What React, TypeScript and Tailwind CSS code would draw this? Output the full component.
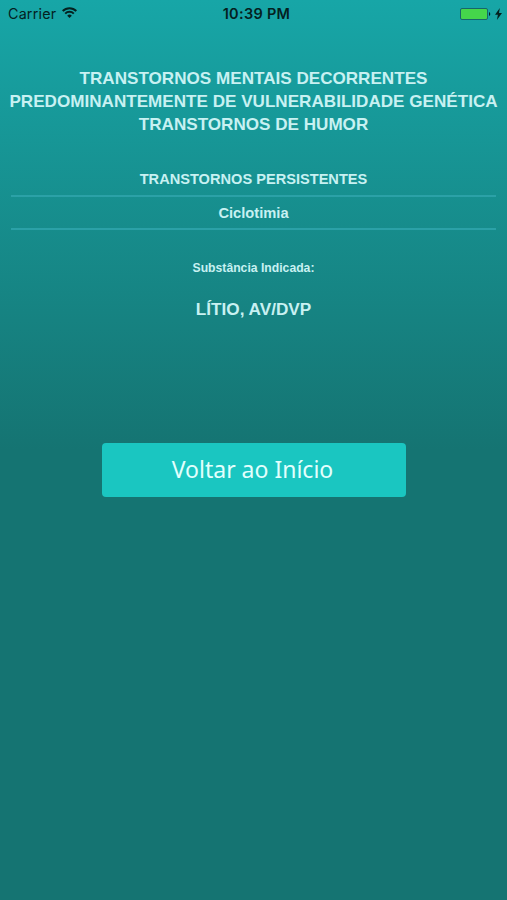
function StatusBar() {
  return (
    <header className="grid h-[28px] grid-cols-3 items-center pl-[8px] pr-[5px] font-[Inter,sans-serif] text-[#04211f]">
      <div className="flex items-center gap-[6px]">
        <span className="text-[14.3px] leading-none tracking-[0.2px]">Carrier</span>
        <svg className="mb-[2px]" width="15" height="11" viewBox="0 0 15 11" fill="none" stroke="currentColor" strokeWidth="2">
          <path d="M0.7 4a9.6 9.6 0 0 1 13.6 0" />
          <path d="M3.2 6.6a6.1 6.1 0 0 1 8.6 0" />
          <path d="M7.5 11 5.2 8.7a3.3 3.3 0 0 1 4.6 0z" fill="currentColor" stroke="none" />
        </svg>
      </div>
      <span className="pl-[3px] text-center text-[14.5px] font-semibold leading-none tracking-[0.3px]">10:39 PM</span>
      <div className="flex items-center justify-end gap-[4px]">
        <svg width="31" height="12" viewBox="0 0 31 12">
          <rect x="0.5" y="0.5" width="27" height="11" rx="1.5" fill="#45d64b" stroke="#17666a" />
          <path d="M29 4a2.2 2.2 0 0 1 0 4z" fill="#04211f" />
        </svg>
        <svg width="7" height="12" viewBox="0 0 7 12" fill="currentColor">
          <path d="M4.8 0 0 6.8h2.9L1.9 12 7 5H4z" />
        </svg>
      </div>
    </header>
  );
}

export default function App() {
  return (
    <div className="flex h-[900px] w-[507px] flex-col overflow-hidden bg-[#157472] bg-linear-to-b from-[#17a6a7] from-0% to-[#157472] to-[450px] font-['Liberation_Sans',Arial,sans-serif] text-[#c8f1f2]">
      <StatusBar />
      <main className="flex flex-col items-center px-[11px] text-center font-bold">
        <h1 className="mt-[39px] whitespace-nowrap text-[17.1px] leading-[23px]">
          TRANSTORNOS MENTAIS DECORRENTES
          <br />
          PREDOMINANTEMENTE DE VULNERABILIDADE GENÉTICA
          <br />
          TRANSTORNOS DE HUMOR
        </h1>
        <h2 className="mt-[27px] h-[34px] w-full border-b-2 border-[#2ba1a7] pt-[6px] text-[14.6px] leading-[20px]">
          TRANSTORNOS PERSISTENTES
        </h2>
        <p className="h-[33px] w-full border-b-2 border-[#2ba1a7] pt-[6px] text-[14.7px] leading-[20px]">Ciclotimia</p>
        <p className="mt-[30px] text-[12.2px] leading-[16px]">Substância Indicada:</p>
        <p className="mt-[21px] text-[17.2px] leading-[24px]">LÍTIO, AV/DVP</p>
        <button className="mt-[122px] h-[54px] w-[304px] rounded-[4px] bg-[#1ac6c1] pb-[2px] pr-[2px] font-['Noto_Sans',sans-serif] text-[23px] font-normal text-[#e2fffd]">
          Voltar ao Início
        </button>
      </main>
    </div>
  );
}
